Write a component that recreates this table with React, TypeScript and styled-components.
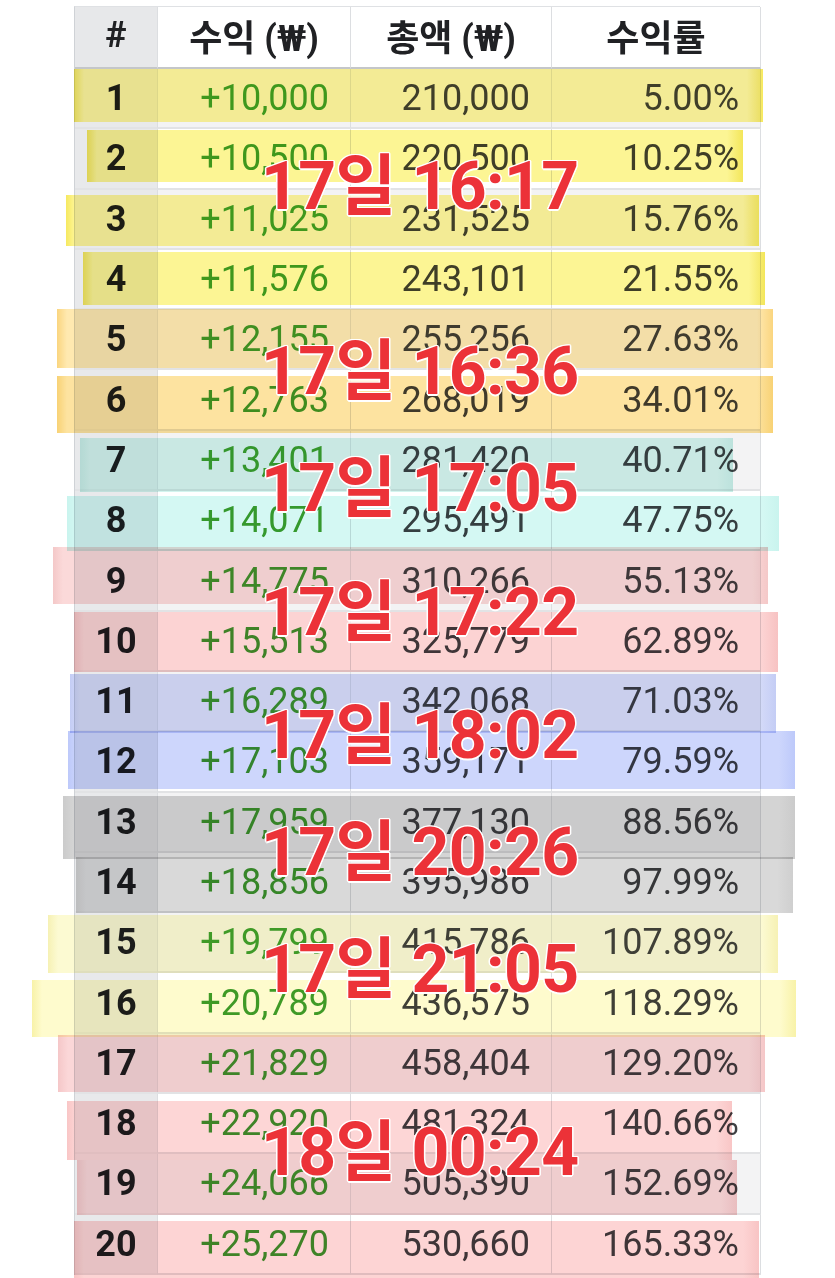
import React from "react";
import styled, { createGlobalStyle } from "styled-components";

const Global = createGlobalStyle`
  html, body { margin: 0; padding: 0; background: #ffffff; }
  body { font-family: Roboto, "Noto Sans CJK KR", sans-serif; }
`;

const ROW_H = 60.3;
const HEAD_TOP = 6;

type Row = [string, string, string, string];

const rows: Row[] = [
  ["1", "+10,000", "210,000", "5.00%"],
  ["2", "+10,500", "220,500", "10.25%"],
  ["3", "+11,025", "231,525", "15.76%"],
  ["4", "+11,576", "243,101", "21.55%"],
  ["5", "+12,155", "255,256", "27.63%"],
  ["6", "+12,763", "268,019", "34.01%"],
  ["7", "+13,401", "281,420", "40.71%"],
  ["8", "+14,071", "295,491", "47.75%"],
  ["9", "+14,775", "310,266", "55.13%"],
  ["10", "+15,513", "325,779", "62.89%"],
  ["11", "+16,289", "342,068", "71.03%"],
  ["12", "+17,103", "359,171", "79.59%"],
  ["13", "+17,959", "377,130", "88.56%"],
  ["14", "+18,856", "395,986", "97.99%"],
  ["15", "+19,799", "415,786", "107.89%"],
  ["16", "+20,789", "436,575", "118.29%"],
  ["17", "+21,829", "458,404", "129.20%"],
  ["18", "+22,920", "481,324", "140.66%"],
  ["19", "+24,066", "505,390", "152.69%"],
  ["20", "+25,270", "530,660", "165.33%"],
];

type Mark = { x1: number; x2: number; y1: number; y2: number; c: string; e: string };

const marks: Mark[] = [
  { x1: 74, x2: 763, y1: 69, y2: 122, c: "#fff79c", e: "#f6e960" },
  { x1: 87, x2: 743, y1: 130, y2: 182, c: "#fcf594", e: "#f3e65a" },
  { x1: 66, x2: 759, y1: 195, y2: 246, c: "#fff79c", e: "#f6e960" },
  { x1: 83, x2: 765, y1: 252, y2: 305, c: "#fcf594", e: "#f3e65a" },
  { x1: 57, x2: 773, y1: 309, y2: 368, c: "#ffe9b0", e: "#fad57f" },
  { x1: 57, x2: 773, y1: 376, y2: 433, c: "#fde3a0", e: "#f8d275" },
  { x1: 80, x2: 733, y1: 438, y2: 492, c: "#d3f4ee", e: "#c6eee6" },
  { x1: 67, x2: 779, y1: 496, y2: 551, c: "#d4f8f3", e: "#c9f4ee" },
  { x1: 53, x2: 768, y1: 547, y2: 604, c: "#fbd9d9", e: "#f4c8c8" },
  { x1: 74, x2: 778, y1: 612, y2: 672, c: "#fcd3d3", e: "#f7c2c2" },
  { x1: 70, x2: 776, y1: 674, y2: 733, c: "#d4daf8", e: "#c4cdf5" },
  { x1: 68, x2: 795, y1: 731, y2: 789, c: "#cdd6fc", e: "#bdc9fa" },
  { x1: 63, x2: 795, y1: 796, y2: 859, c: "#d4d4d4", e: "#cbcbcb" },
  { x1: 76, x2: 793, y1: 857, y2: 913, c: "#d9d9d9", e: "#cfcfcf" },
  { x1: 48, x2: 778, y1: 915, y2: 973, c: "#fcfad2", e: "#f6f1b4" },
  { x1: 32, x2: 796, y1: 980, y2: 1037, c: "#fefbcd", e: "#f8f2a8" },
  { x1: 58, x2: 765, y1: 1035, y2: 1092, c: "#fbd7d8", e: "#f5c7c8" },
  { x1: 67, x2: 732, y1: 1101, y2: 1160, c: "#fdd6d6", e: "#f9c6c6" },
  { x1: 77, x2: 737, y1: 1160, y2: 1215, c: "#fbd7d8", e: "#f5c7c8" },
  { x1: 74, x2: 759, y1: 1221, y2: 1278, c: "#fdd4d4", e: "#f8c4c4" },
];

const stamps: { text: string; center: number }[] = [
  { text: "17일 16:17", center: 187 },
  { text: "17일 16:36", center: 372 },
  { text: "17일 17:05", center: 489 },
  { text: "17일 17:22", center: 613 },
  { text: "17일 18:02", center: 736 },
  { text: "17일 20:26", center: 853 },
  { text: "17일 21:05", center: 970 },
  { text: "18일 00:24", center: 1153 },
];

const Sheet = styled.div`
  position: relative;
  width: 835px;
  height: 1278px;
  overflow: hidden;
  background: #ffffff;
`;

const Table = styled.div`
  margin: ${HEAD_TOP}px 0 0 74px;
  width: 686px;
  display: grid;
  grid-template-columns: 83px 193px 201px 209px;
  grid-template-rows: 62px repeat(20, ${ROW_H}px);
  border-left: 1px solid #cfd2d6;
  border-right: 1px solid #d6d8db;
  border-top: 1px solid #dfe1e4;
  box-sizing: border-box;
`;

const HeadCell = styled.div<{ $index?: boolean }>`
  display: flex;
  align-items: center;
  justify-content: center;
  background: ${(p) => (p.$index ? "#e7e8ea" : "#ffffff")};
  border-bottom: 2px solid #c4c6c9;
  border-right: 1px solid #dcdee1;
  box-sizing: border-box;
  font-family: Roboto, "Noto Sans CJK KR", sans-serif;
  font-weight: 700;
  font-size: 36px;
  color: #202124;
  padding-bottom: 4px;
`;

const Cell = styled.div<{ $kind: "index" | "gain" | "total" | "rate"; $odd: boolean }>`
  display: flex;
  align-items: center;
  justify-content: ${(p) => (p.$kind === "index" ? "center" : "flex-end")};
  padding-right: ${(p) => (p.$kind === "index" ? 0 : 21)}px;
  box-sizing: border-box;
  background: ${(p) => (p.$kind === "index" ? "#e8e9eb" : p.$odd ? "#f3f3f4" : "#ffffff")};
  border-bottom: 2px solid #e2e3e5;
  border-right: 1px solid #dcdee1;
  font-family: Roboto, sans-serif;
  font-size: 36px;
  font-weight: ${(p) => (p.$kind === "index" ? 700 : 400)};
  color: ${(p) =>
    p.$kind === "index" ? "#1c1d20" : p.$kind === "gain" ? "#3f9d2f" : "#3f4043"};
`;

const Marker = styled.div<{ $c: string; $e: string }>`
  position: absolute;
  mix-blend-mode: multiply;
  background: linear-gradient(90deg, ${(p) => p.$e} 0px, ${(p) => p.$c} 10px, ${(p) => p.$c} calc(100% - 16px), ${(p) => p.$e} 100%);
  pointer-events: none;
`;

const Stamp = styled.div`
  position: absolute;
  left: 261px;
  height: 64px;
  line-height: 64px;
  font-family: Roboto, "Noto Sans CJK KR", sans-serif;
  font-weight: 700;
  font-size: 66px;
  letter-spacing: -0.6px;
  color: #ec3238;
  white-space: nowrap;
  text-shadow:
    1.5px 0 0 #fff, -1.5px 0 0 #fff, 0 1.5px 0 #fff, 0 -1.5px 0 #fff,
    1px 1px 0 #fff, -1px 1px 0 #fff, 1px -1px 0 #fff, -1px -1px 0 #fff;
`;

export default function App() {
  return (
    <>
      <Global />
      <Sheet>
        <Table>
          <HeadCell $index>#</HeadCell>
          <HeadCell>수익 (₩)</HeadCell>
          <HeadCell>총액 (₩)</HeadCell>
          <HeadCell>수익률</HeadCell>
          {rows.map((r, i) => {
            const odd = i % 2 === 0;
            return (
              <React.Fragment key={r[0]}>
                <Cell $kind="index" $odd={odd}>{r[0]}</Cell>
                <Cell $kind="gain" $odd={odd}>{r[1]}</Cell>
                <Cell $kind="total" $odd={odd}>{r[2]}</Cell>
                <Cell $kind="rate" $odd={odd}>{r[3]}</Cell>
              </React.Fragment>
            );
          })}
        </Table>
        {marks.map((m, i) => (
          <Marker
            key={i}
            $c={m.c}
            $e={m.e}
            style={{ left: m.x1, top: m.y1, width: m.x2 - m.x1, height: m.y2 - m.y1 }}
          />
        ))}
        {stamps.map((s) => (
          <Stamp key={s.text} style={{ top: s.center - 32 }}>
            {s.text}
          </Stamp>
        ))}
      </Sheet>
    </>
  );
}
